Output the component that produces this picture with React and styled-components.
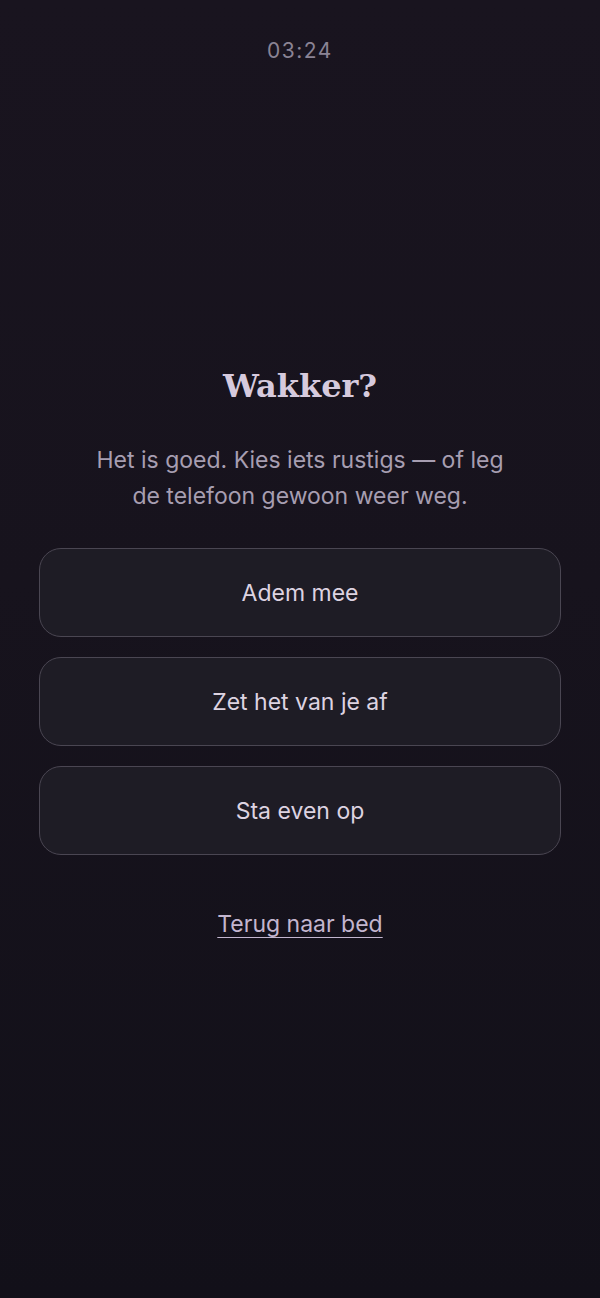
import React from "react";
import styled, { createGlobalStyle } from "styled-components";

const GlobalStyle = createGlobalStyle`
  html, body { margin: 0; padding: 0; }
  body {
    background: #17131d;
    font-family: Inter, "Noto Sans", sans-serif;
  }
  * { box-sizing: border-box; }
`;

const Screen = styled.div`
  min-height: 1298px;
  display: flex;
  flex-direction: column;
  align-items: center;
  background: linear-gradient(180deg, #19141f 0%, #17131d 45%, #121019 100%);
`;

const Clock = styled.div`
  margin-top: 37px;
  height: 28px;
  line-height: 28px;
  font-family: Inter, sans-serif;
  font-size: 21px;
  letter-spacing: 1.5px;
  color: #8a8394;
`;

const Content = styled.main`
  width: 100%;
  margin-top: 299px;
  padding: 0 39px;
  display: flex;
  flex-direction: column;
  align-items: center;
`;

const Title = styled.h1`
  margin: 0;
  font-family: "DejaVu Serif", "Liberation Serif", serif;
  font-weight: 700;
  font-size: 32px;
  line-height: 44px;
  color: #d6cadd;
`;

const Lead = styled.p`
  margin: 34px 0 0;
  max-width: 430px;
  text-align: center;
  font-size: 23px;
  line-height: 36px;
  color: #a79eb1;
`;

const Choices = styled.div`
  width: 100%;
  margin-top: 34px;
  display: flex;
  flex-direction: column;
  gap: 20px;
`;

const Choice = styled.button`
  width: 100%;
  height: 89px;
  border-radius: 22px;
  border: 1.5px solid #4a4652;
  background: #1e1c25;
  color: #ddd3e1;
  font-family: Inter, sans-serif;
  font-size: 23px;
  cursor: pointer;
`;

const BackLink = styled.a`
  margin-top: 53px;
  font-size: 23px;
  line-height: 32px;
  color: #c3b6cf;
  text-decoration: underline;
  text-underline-offset: 5px;
  text-decoration-thickness: 1px;
  cursor: pointer;
`;

const options = ["Adem mee", "Zet het van je af", "Sta even op"];

export default function App() {
  return (
    <>
      <GlobalStyle />
      <Screen>
        <Clock>03:24</Clock>
        <Content>
          <Title>Wakker?</Title>
          <Lead>
            Het is goed. Kies iets rustigs — of leg de telefoon gewoon weer weg.
          </Lead>
          <Choices>
            {options.map((o) => (
              <Choice key={o}>{o}</Choice>
            ))}
          </Choices>
          <BackLink>Terug naar bed</BackLink>
        </Content>
      </Screen>
    </>
  );
}
